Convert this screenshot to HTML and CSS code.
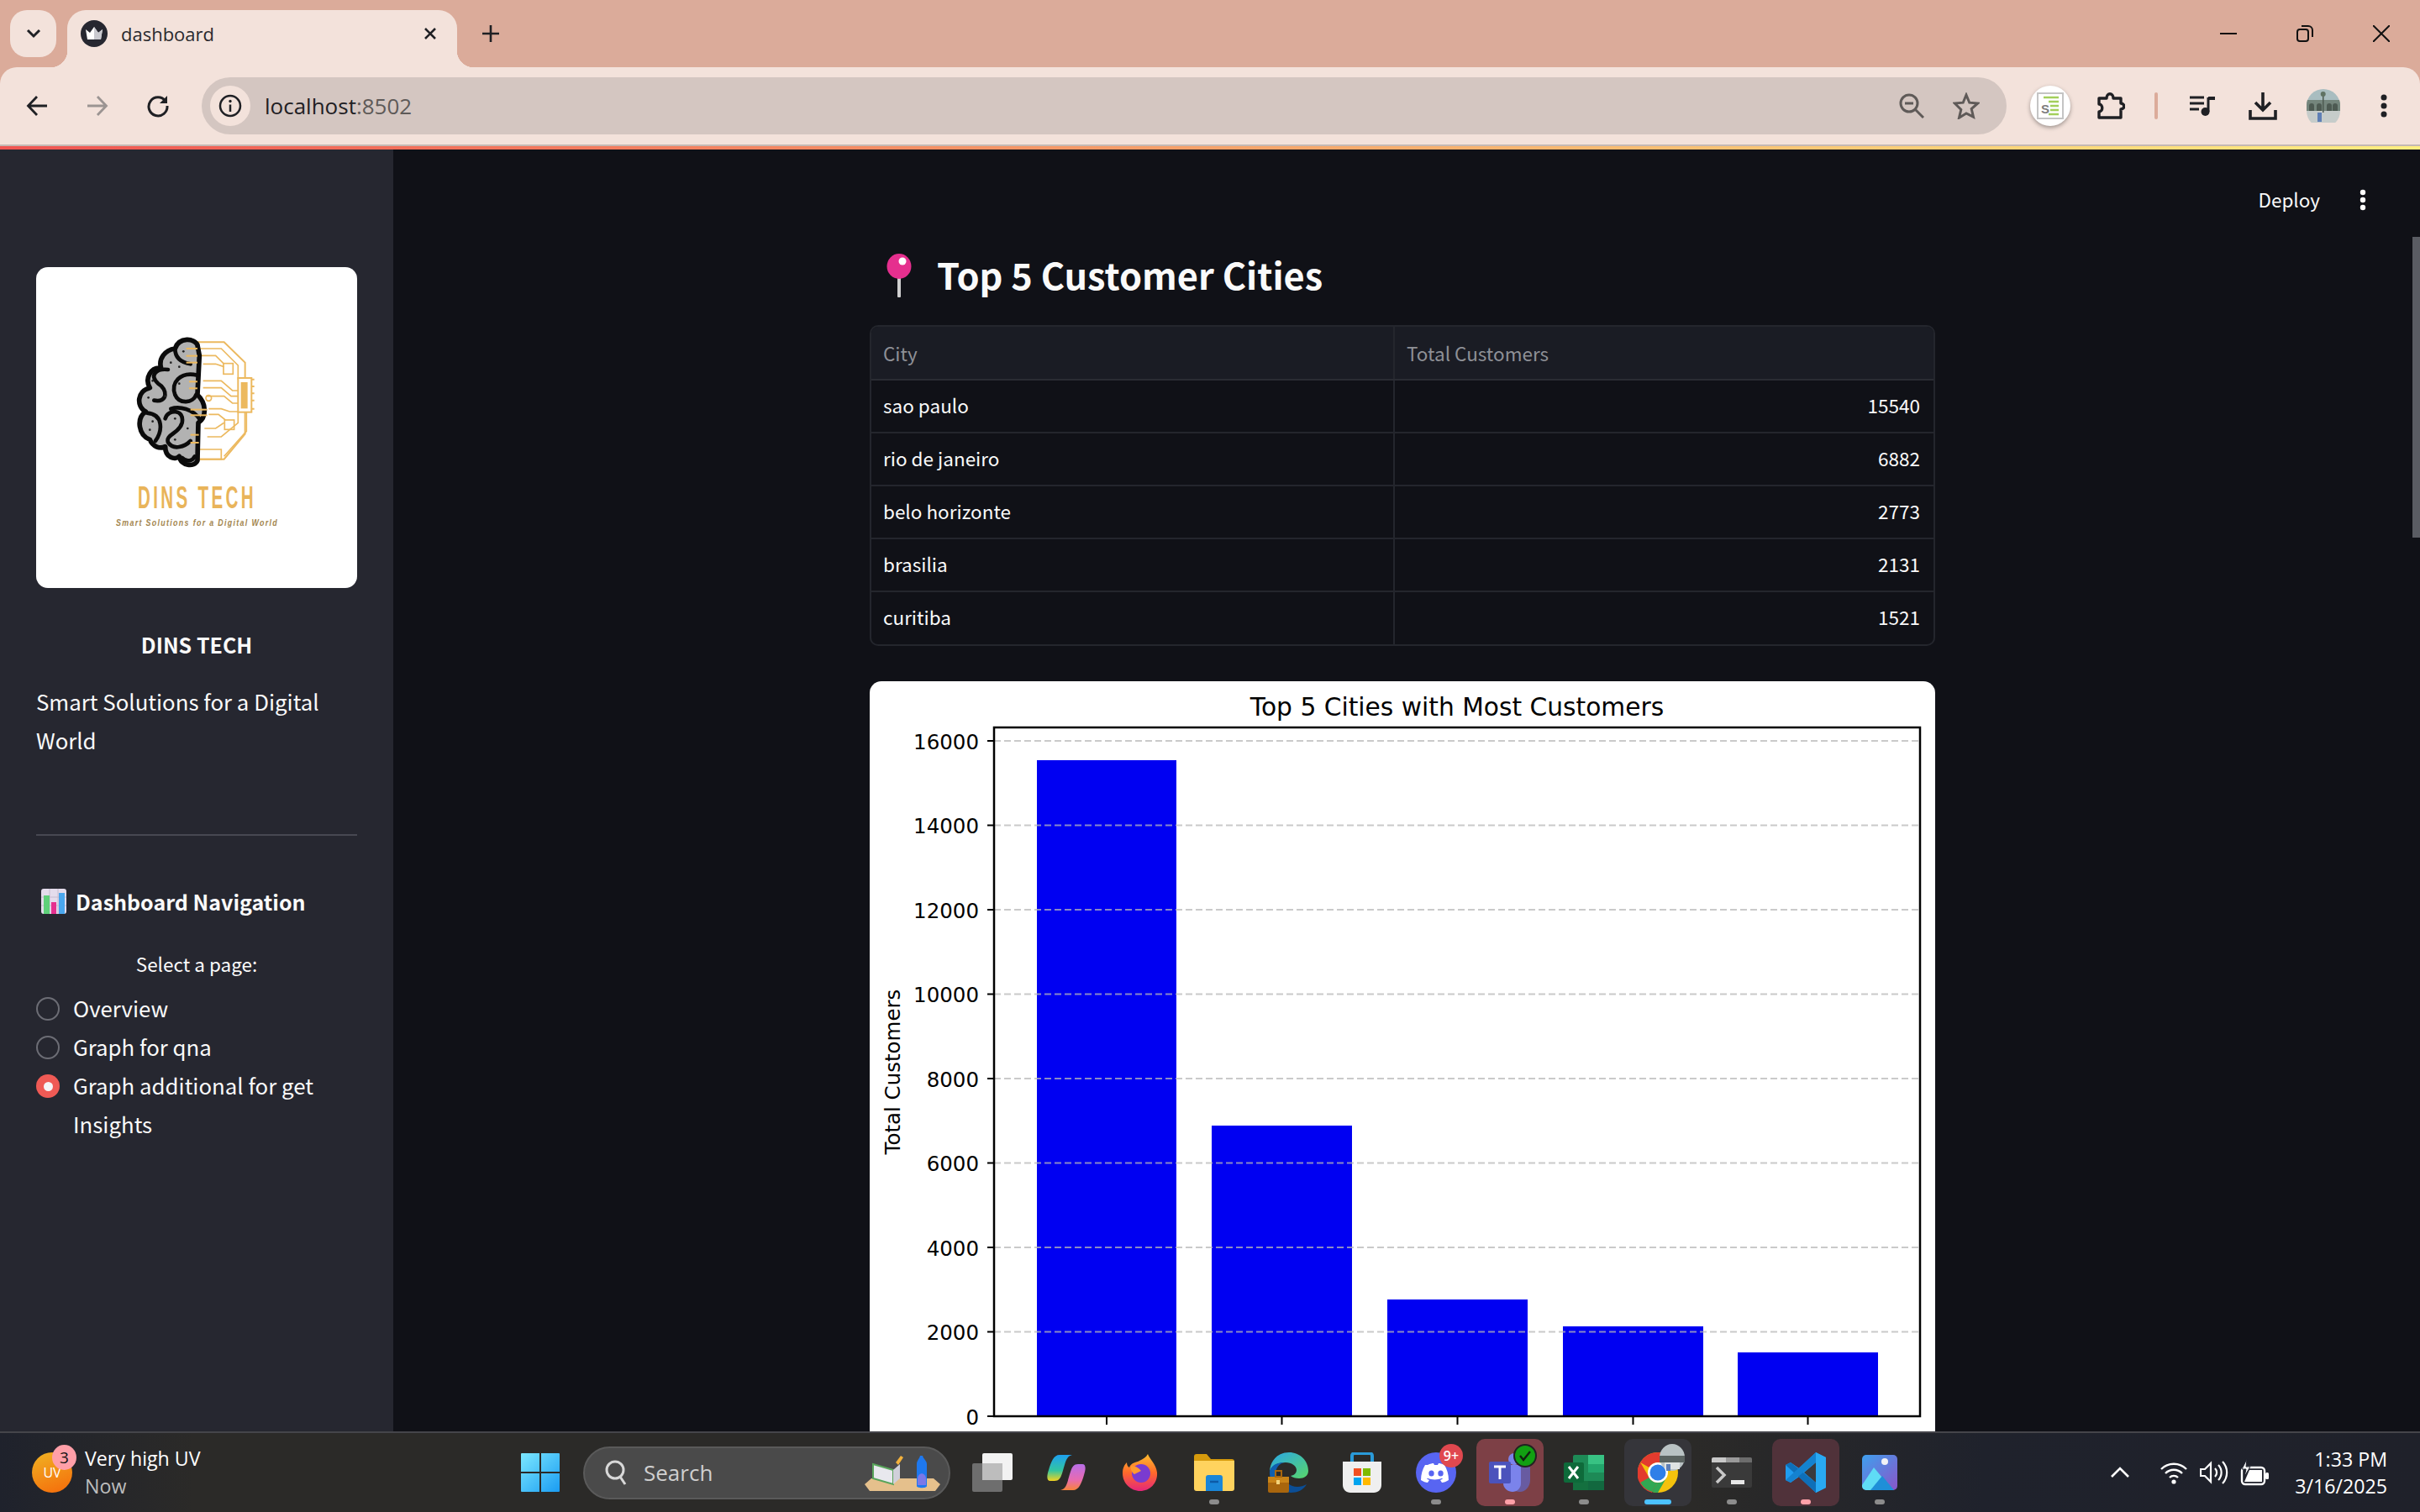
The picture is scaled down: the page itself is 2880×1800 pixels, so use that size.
FILE: index.html
```html
<!DOCTYPE html>
<html lang="en">
<head>
    <meta charset="UTF-8">
    <meta name="viewport" content="width=device-width, initial-scale=1.0">
    <title>dashboard</title>
    <link rel="stylesheet" href="styles.css">
</head>
<body>
    <div class="frame">
        <div class="tabstrip">
            <div class="tab-search">
                <svg width="20" height="14" viewBox="0 0 20 14"><path d="M3 3l7 7 7-7" fill="none" stroke="#1f2024" stroke-width="3"/></svg>
            </div>
            <div class="tab">
                <svg class="favicon" width="32" height="32" viewBox="0 0 32 32">
                    <circle cx="16" cy="16" r="16" fill="#262730"/>
                    <path d="M6 11l5 4 5-7 5 7 5-4-2 12H8z" fill="#fff"/>
                    <path d="M16 8l5 7 5-4-2 12h-8z" fill="#c9c9cf"/>
                </svg>
                <span class="tab-title">dashboard</span>
                <svg class="tab-close" width="16" height="16" viewBox="0 0 16 16"><path d="M2 2l12 12M14 2L2 14" stroke="#1f2024" stroke-width="2.6"/></svg>
            </div>
            <svg class="new-tab" width="24" height="24" viewBox="0 0 24 24"><path d="M12 2v20M2 12h20" stroke="#1f2024" stroke-width="2.6"/></svg>
            <div class="win-controls">
                <svg width="20" height="20" viewBox="0 0 20 20"><path d="M0 10h20" stroke="#111" stroke-width="2"/></svg>
                <svg width="20" height="20" viewBox="0 0 20 20"><rect x="1" y="5" width="13" height="14" rx="3" fill="none" stroke="#111" stroke-width="2"/><path d="M6 1h8a5 5 0 0 1 5 5v8" fill="none" stroke="#111" stroke-width="2"/></svg>
                <svg width="20" height="20" viewBox="0 0 20 20"><path d="M0 0l20 20M20 0L0 20" stroke="#111" stroke-width="2"/></svg>
            </div>
        </div>
        <div class="toolbar">
            <div class="tool">
                <svg width="28" height="28" viewBox="0 0 28 28"><path d="M26 14H4M14 3L3.500 14 14 25" fill="none" stroke="#1f2024" stroke-width="2.800"/></svg>
            </div>
            <div class="tool">
                <svg width="28" height="28" viewBox="0 0 28 28"><path d="M2 14h22M14 3l10.500 11L14 25" fill="none" stroke="#9b9492" stroke-width="2.800"/></svg>
            </div>
            <div class="tool">
                <svg width="28" height="28" viewBox="0 0 28 28"><path d="M23 8.500A11 11 0 1 0 25 14" fill="none" stroke="#1f2024" stroke-width="3"/><path d="M25 2v9h-9z" fill="#1f2024"/></svg>
            </div>
            <div class="omnibox">
                <div class="site-chip">
                    <svg width="28" height="28" viewBox="0 0 28 28"><circle cx="14" cy="14" r="12" fill="none" stroke="#1f2024" stroke-width="2.500"/><path d="M14 12.500V21" stroke="#1f2024" stroke-width="2.500"/><circle cx="14" cy="8.500" r="1.700" fill="#1f2024"/></svg>
                </div>
                <span class="url">localhost<span class="url-port">:8502</span></span>
                <svg class="omni-zoom" width="30" height="30" viewBox="0 0 30 30"><circle cx="12" cy="12" r="10" fill="none" stroke="#5f5a58" stroke-width="3"/><path d="M7 12h10" stroke="#5f5a58" stroke-width="3"/><path d="M19 19l10 10" stroke="#5f5a58" stroke-width="3"/></svg>
                <svg class="omni-star" width="32" height="32" viewBox="0 0 32 32"><path d="M16 3l3.800 9.200 9.900.800-7.500 6.500 2.300 9.700L16 25l-8.500 5.200 2.300-9.700L2.300 13l9.900-.800z" fill="none" stroke="#5f5a58" stroke-width="3"/></svg>
            </div>
            <div class="tool">
                <div class="ext-badge">
                    <svg width="32" height="32" viewBox="0 0 32 32">
                        <rect x="1" y="1" width="30" height="30" fill="#fff" stroke="#c4c4c4" stroke-width="2"/>
                        <path d="M8 6h18M14 11h12M16 16h10M16 21h10M14 26h12" stroke="#a3cf5b" stroke-width="2.600"/>
                        <text x="5" y="25" class="ext-letter">S</text>
                    </svg>
                </div>
            </div>
            <div class="tool">
                <svg width="34" height="34" viewBox="0 0 34 34"><path d="M3 8h9c0-7 8-7 8 0h9v6c5 0 5 7 0 7v10H3v-7c5 0 5-9 0-9z" fill="none" stroke="#1f2024" stroke-width="3.400" stroke-linejoin="round"/></svg>
            </div>
            <div class="tool-sep"></div>
            <div class="tool">
                <svg width="32" height="26" viewBox="0 0 32 26"><path d="M1 3h17M1 10h17M1 17h11" stroke="#1f2024" stroke-width="3"/><path d="M23 3v17" stroke="#1f2024" stroke-width="3"/><path d="M23 2h8v4h-8z" fill="#1f2024"/><circle cx="19.500" cy="20" r="5" fill="#1f2024"/></svg>
            </div>
            <div class="tool">
                <svg width="34" height="34" viewBox="0 0 34 34"><path d="M17 1v21M8 13l9 9 9-9" fill="none" stroke="#1f2024" stroke-width="3.600"/><path d="M2 22v10h30V22" fill="none" stroke="#1f2024" stroke-width="3.600"/></svg>
            </div>
            <div class="tool">
                <svg class="avatar" width="40" height="40" viewBox="0 0 40 40">
                    <circle cx="20" cy="20" r="20" fill="#a9bdc0"/>
                    <path d="M1 13h38a20 20 0 0 1 1 7v6H0v-6a20 20 0 0 1 1-7z" fill="#74857c"/>
                    <path d="M3 26v-6a3 3 0 0 1 6 0v6zM12 26v-6a3 3 0 0 1 6 0v6zM24 26v-6a3 3 0 0 1 6 0v6zM31 26v-6a3 3 0 0 1 6 0v6z" fill="#4d5a52"/>
                    <path d="M0 26h40a20 20 0 0 1-40 0z" fill="#c6ccca"/>
                    <path d="M19 4h1.500v24H19z" fill="#4d5a50"/>
                    <circle cx="19.700" cy="6" r="3" fill="#5f7263"/>
                    <rect x="13" y="28" width="5" height="11" fill="#5f7fb5"/>
                </svg>
            </div>
            <div class="tool">
                <svg width="10" height="30" viewBox="0 0 10 30"><circle cx="5" cy="5" r="3.500" fill="#1f2024"/><circle cx="5" cy="15" r="3.500" fill="#1f2024"/><circle cx="5" cy="25" r="3.500" fill="#1f2024"/></svg>
            </div>
        </div>
    </div>
    <div class="deco-line"></div>

    <div class="app">
        <aside class="sidebar">
            <div class="logo-card">
                <svg width="382" height="382" viewBox="0 0 382 382">
                    <g transform="scale(0.3333) translate(-129,-84)" class="logo-art">
                        <g fill="none" stroke="#ecb95f" stroke-width="5">
                            <path d="M705 352H800L875 425V480M875 600V680L800 770H710" stroke-width="6"/>
                            <path d="M715 375H790L850 435V485"/>
                            <path d="M720 400H770L800 430M725 430H770L800 440"/>
                            <rect x="798" y="428" width="34" height="38"/>
                            <path d="M725 490H790L830 525H852M725 515H790L825 545H852M735 545H800L830 570H852M745 590H790L820 600H852M745 610H780L805 630"/>
                            <rect x="802" y="630" width="34" height="34"/>
                            <path d="M730 660H770L800 640M740 690H790L850 640V600M710 735H790V770H710zM800 760L880 670V600"/>
                            <circle cx="745" cy="552" r="10"/>
                        </g>
                        <rect x="850" y="480" width="48" height="122" fill="#fff" stroke="#ecb95f" stroke-width="6"/>
                        <rect x="860" y="495" width="24" height="94" fill="#ecb95f"/>
                        <path d="M898 485h10M898 510h10M898 535h10M898 560h10M898 590h10" stroke="#ecb95f" stroke-width="6"/>
                        <path d="M705 362C695 338 640 332 625 375C590 380 565 410 575 445C540 440 515 480 535 515C490 525 485 580 520 600C485 625 495 685 535 700C545 725 570 735 590 725C590 765 625 775 640 760C645 795 695 800 705 775L708 640C738 620 738 570 705 540L712 400Z" fill="#b2b2b2" stroke="#0b0b0b" stroke-width="17" stroke-linejoin="round"/>
                        <g fill="none" stroke="#0b0b0b" stroke-width="14" stroke-linecap="round">
                            <path d="M625 375C625 410 650 425 680 430"/>
                            <path d="M600 450C560 445 530 470 565 500C600 520 600 570 550 560"/>
                            <path d="M705 470C640 455 610 500 625 540C640 575 690 570 700 540"/>
                            <path d="M590 625C600 590 660 590 650 640C640 680 590 680 600 710C620 740 660 725 680 705"/>
                            <path d="M525 605C585 610 580 670 555 705"/>
                            <path d="M650 765C670 785 690 772 695 760"/>
                            <path d="M610 590C640 580 690 590 715 630"/>
                        </g>
                        <g fill="#222">
                            <circle cx="655" cy="385" r="4"/><circle cx="610" cy="425" r="4"/><circle cx="640" cy="440" r="4"/>
                            <circle cx="545" cy="490" r="4"/><circle cx="530" cy="550" r="4"/><circle cx="590" cy="545" r="4"/>
                            <circle cx="640" cy="500" r="4"/><circle cx="545" cy="635" r="4"/><circle cx="535" cy="665" r="4"/>
                            <circle cx="625" cy="625" r="4"/><circle cx="670" cy="660" r="4"/><circle cx="625" cy="700" r="4"/>
                        </g>
                        <g fill="#ecb95f">
                            <rect x="665" y="372" width="40" height="6"/><rect x="665" y="398" width="40" height="6"/><rect x="665" y="422" width="40" height="6"/>
                            <rect x="675" y="490" width="30" height="6"/><rect x="675" y="514" width="30" height="6"/>
                            <rect x="680" y="590" width="60" height="6"/><rect x="680" y="610" width="60" height="6"/>
                            <rect x="680" y="680" width="30" height="6"/><rect x="680" y="708" width="30" height="6"/>
                        </g>
                    </g>
                    <text class="logo-name" x="121" y="287" textLength="141" lengthAdjust="spacingAndGlyphs">DINS TECH</text>
                    <text class="logo-tag" x="95" y="308" textLength="193" lengthAdjust="spacingAndGlyphs">Smart Solutions for a Digital World</text>
                </svg>
            </div>
            <div class="brand">DINS TECH</div>
            <p class="tagline">Smart Solutions for a Digital World</p>
            <hr class="side-rule">
            <div class="nav-title">
                <svg width="30" height="30" viewBox="0 0 30 30">
                    <rect width="30" height="30" rx="3" fill="#e4dcec"/>
                    <path d="M10 0v30M20 0v30M0 10h30M0 20h30" stroke="#c6bccf" stroke-width="1"/>
                    <rect x="3" y="8" width="7" height="22" fill="#5fd07a"/>
                    <rect x="12" y="16" width="6" height="14" fill="#e5308f"/>
                    <rect x="21" y="5" width="7" height="25" fill="#4aa7ee"/>
                </svg>
                <span>Dashboard Navigation</span>
            </div>
            <div class="radio-label">Select a page:</div>
            <div class="radio-row"><span class="radio"></span><span>Overview</span></div>
            <div class="radio-row"><span class="radio"></span><span>Graph for qna</span></div>
            <div class="radio-row"><span class="radio radio-on"></span><span>Graph additional for get Insights</span></div>
        </aside>

        <main class="main">
            <div class="main-head">
                <span class="deploy">Deploy</span>
                <svg width="24" height="28" viewBox="0 0 24 28"><circle cx="12" cy="5" r="3.200" fill="#fff"/><circle cx="12" cy="14" r="3.200" fill="#fff"/><circle cx="12" cy="23" r="3.200" fill="#fff"/></svg>
            </div>
            <div class="content">
                <h1 class="page-title">
                    <svg width="32" height="52" viewBox="0 0 32 52">
                        <rect x="14" y="24" width="4" height="28" rx="1" fill="#cfcfcf"/>
                        <ellipse cx="16" cy="15" rx="14.500" ry="15" fill="#e52f8e"/>
                        <ellipse cx="20" cy="9" rx="4.500" ry="4.500" fill="#fff"/>
                    </svg>
                    <span class="page-title-text">Top 5 Customer Cities</span>
                </h1>
                <div class="table-wrap">
                    <table class="city-table">
                        <thead>
                            <tr><th class="col-city">City</th><th>Total Customers</th></tr>
                        </thead>
                        <tbody>
                            <tr><td>sao paulo</td><td class="num">15540</td></tr>
                            <tr><td>rio de janeiro</td><td class="num">6882</td></tr>
                            <tr><td>belo horizonte</td><td class="num">2773</td></tr>
                            <tr><td>brasilia</td><td class="num">2131</td></tr>
                            <tr><td>curitiba</td><td class="num">1521</td></tr>
                        </tbody>
                    </table>
                </div>
                <div class="chart-card">
                    <svg class="chart" width="1268" height="893" viewBox="1035 811 1268 893">
                        <text class="chart-title" x="1734" y="852" text-anchor="middle">Top 5 Cities with Most Customers</text>
                        <g fill="#0000f2">
                            <rect x="1234" y="905" width="166" height="781"/>
                            <rect x="1442" y="1340" width="167" height="346"/>
                            <rect x="1651" y="1547" width="167" height="139"/>
                            <rect x="1860" y="1579" width="167" height="107"/>
                            <rect x="2068" y="1610" width="167" height="76"/>
                        </g>
                        <g class="grid">
                            <path d="M1183 882H2285"/><path d="M1183 982.500H2285"/><path d="M1183 1083H2285"/><path d="M1183 1183.500H2285"/>
                            <path d="M1183 1284H2285"/><path d="M1183 1384.500H2285"/><path d="M1183 1485H2285"/><path d="M1183 1585.500H2285"/>
                        </g>
                        <rect x="1183" y="866" width="1102" height="820" fill="none" stroke="#000" stroke-width="2.500"/>
                        <path d="M1175 882h8M1175 982.500h8M1175 1083h8M1175 1183.500h8M1175 1284h8M1175 1384.500h8M1175 1485h8M1175 1585.500h8M1175 1686h8" stroke="#000" stroke-width="2"/>
                        <path d="M1317 1686v10M1525.500 1686v10M1734.500 1686v10M1943.500 1686v10M2151.500 1686v10" stroke="#000" stroke-width="2"/>
                        <g class="tick-label" text-anchor="end">
                            <text x="1165" y="892">16000</text>
                            <text x="1165" y="992">14000</text>
                            <text x="1165" y="1093">12000</text>
                            <text x="1165" y="1193">10000</text>
                            <text x="1165" y="1294">8000</text>
                            <text x="1165" y="1394">6000</text>
                            <text x="1165" y="1495">4000</text>
                            <text x="1165" y="1595">2000</text>
                            <text x="1165" y="1696">0</text>
                        </g>
                        <text class="tick-label" transform="translate(1071,1276) rotate(-90)" text-anchor="middle">Total Customers</text>
                    </svg>
                </div>
            </div>
            <div class="scroll-thumb"></div>
        </main>
    </div>

    <footer class="taskbar">
        <div class="weather">
            <div class="uv-icon">
                <span class="uv-text">UV</span>
                <span class="uv-badge">3</span>
            </div>
            <div class="weather-text">
                <div>Very high UV</div>
                <div class="weather-sub">Now</div>
            </div>
        </div>
        <svg class="start" width="46" height="46" viewBox="0 0 46 46">
            <defs><linearGradient id="winblue" x1="0" y1="0" x2="1" y2="1"><stop offset="0" stop-color="#7ce8ff"/><stop offset="1" stop-color="#1a9cf2"/></linearGradient></defs>
            <path d="M0 1a1 1 0 0 1 1-1h21v22H0zM24 0h21a1 1 0 0 1 1 1v21H24zM0 24h22v22H1a1 1 0 0 1-1-1zM24 24h22v21a1 1 0 0 1-1 1H24z" fill="url(#winblue)"/>
        </svg>
        <div class="search">
            <svg width="30" height="32" viewBox="0 0 30 32"><circle cx="14" cy="13" r="10" fill="none" stroke="#d8d8d8" stroke-width="3"/><path d="M20 21l6 9" stroke="#d8d8d8" stroke-width="3"/></svg>
            <span class="search-text">Search</span>
            <svg class="search-art" width="90" height="48" viewBox="0 0 90 48">
                <path d="M0 38l8-7h74l8 7-6 8H6z" fill="#e5c08c"/>
                <path d="M10 14l24 7v17l-24-7z" fill="#e8e8ee" stroke="#58a45a" stroke-width="2"/>
                <path d="M34 21l8-7v17l-8 7z" fill="#d0d0da"/>
                <path d="M37 12l6-8 3 2-6 9z" fill="#f4b23c"/>
                <path d="M62 14c0-4 3-6 4-10h3c1 4 5 6 5 10v26c0 3-12 3-12 0z" fill="#1e78ee"/>
                <path d="M63 32c0-9 10-9 10 0v7H63z" fill="#7a78e8"/>
            </svg>
        </div>
        <div class="apps">
            <div class="app-slot">
                <svg width="48" height="46" viewBox="0 0 48 46">
                    <rect x="12" width="36" height="32" rx="2" fill="#f2f2f2"/>
                    <rect y="12" width="36" height="34" rx="2" fill="#6e6e6e"/>
                    <rect x="12" y="12" width="24" height="20" fill="#bdbdbd"/>
                </svg>
            </div>
            <div class="app-slot">
                <svg width="46" height="42" viewBox="0 0 46 42">
                    <defs>
                        <linearGradient id="cop1" x1="0" y1="0" x2="0" y2="1"><stop offset="0" stop-color="#1ea0f0"/><stop offset=".6" stop-color="#33c6a0"/><stop offset="1" stop-color="#f3d21f"/></linearGradient>
                        <linearGradient id="cop2" x1="0" y1="0" x2="0" y2="1"><stop offset="0" stop-color="#b86ee8"/><stop offset=".6" stop-color="#e86bb0"/><stop offset="1" stop-color="#f7843a"/></linearGradient>
                    </defs>
                    <path d="M15 0h15c-8 2-8 10-12 22-2 6-4 9-9 9H4C-1 31 0 24 2 18 5 8 8 0 15 0z" fill="url(#cop1)"/>
                    <path d="M31 42H16c8-2 8-10 12-22 2-6 4-9 9-9h5c5 0 4 7 2 13-3 10-6 18-13 18z" fill="url(#cop2)"/>
                </svg>
            </div>
            <div class="app-slot">
                <svg width="42" height="44" viewBox="0 0 42 44">
                    <defs><linearGradient id="ffx" x1="0" y1="0" x2="0" y2="1"><stop offset="0" stop-color="#ffbd2e"/><stop offset=".5" stop-color="#ff6a2a"/><stop offset="1" stop-color="#e5267a"/></linearGradient></defs>
                    <path d="M30 0c2 6 10 12 11 22 1 13-9 22-20 22S0 35 0 23c0-6 2-10 5-13 0 3 1 5 3 6 2-6 9-6 12-8 4-2 8-4 10-8z" fill="url(#ffx)"/>
                    <circle cx="22" cy="23" r="11" fill="#7a3bd0"/>
                    <path d="M10 14c5 0 9 2 12 6l-8 4c-3-2-5-6-4-10z" fill="#ff9a2e"/>
                </svg>
            </div>
            <div class="app-slot has-dot">
                <svg width="48" height="44" viewBox="0 0 48 44">
                    <path d="M0 3a3 3 0 0 1 3-3h12l5 6h25a3 3 0 0 1 3 3v8H0z" fill="#d69a0c"/>
                    <path d="M0 8h48v33a3 3 0 0 1-3 3H3a3 3 0 0 1-3-3z" fill="#ffd35e"/>
                    <path d="M14 28a3 3 0 0 1 3-3h14a3 3 0 0 1 3 3v16H14z" fill="#1a86d8"/>
                    <path d="M19 33h10" stroke="#0d5aa6" stroke-width="2.500"/>
                </svg>
            </div>
            <div class="app-slot">
                <svg width="48" height="48" viewBox="0 0 48 48">
                    <defs><linearGradient id="edg" x1="0" y1="0" x2="1" y2="1"><stop offset="0" stop-color="#2aa7e8"/><stop offset="1" stop-color="#58d66a"/></linearGradient></defs>
                    <path d="M2 24C2 10 12 0 25 0c13 0 23 10 23 22 0 6-5 9-11 9-4 0-8-1-10-3 5-1 7-4 7-7 0-5-6-9-13-9C10 12 2 18 2 24z" fill="url(#edg)"/>
                    <path d="M2 24c0-7 8-12 17-12-7 2-10 8-10 14 0 10 8 18 18 20-1 1-3 2-6 2C10 48 2 36 2 24z" fill="#0f5fb0"/>
                    <path d="M27 48c8 0 15-3 19-10-5 3-12 4-17 2-3-1-6-3-7-6 0 6 1 14 5 14z" fill="#0b4e96"/>
                    <rect y="29" width="25" height="19" rx="2" fill="#a9660d"/>
                    <rect y="29" width="25" height="7" fill="#c98418"/>
                    <rect x="9" y="22" width="7" height="7" fill="none" stroke="#a9660d" stroke-width="2"/>
                    <rect x="10" y="33" width="4" height="5" fill="#f4d37a"/>
                </svg>
            </div>
            <div class="app-slot">
                <svg width="46" height="48" viewBox="0 0 46 48">
                    <path d="M11 12V4a3 3 0 0 1 3-3h18a3 3 0 0 1 3 3v8" fill="none" stroke="#2a9ad8" stroke-width="4"/>
                    <path d="M0 11h46v28c0 5-4 9-9 9H9c-5 0-9-4-9-9z" fill="#efefef"/>
                    <rect x="13" y="19" width="9" height="9" fill="#f25022"/>
                    <rect x="24" y="19" width="9" height="9" fill="#7fba00"/>
                    <rect x="13" y="30" width="9" height="9" fill="#00a4ef"/>
                    <rect x="24" y="30" width="9" height="9" fill="#ffb900"/>
                </svg>
            </div>
            <div class="app-slot has-dot">
                <svg width="48" height="48" viewBox="0 0 48 48">
                    <circle cx="24" cy="24" r="24" fill="#5865f2"/>
                    <path d="M14 15c3-1.500 6-2 7-2l1 2h4l1-2c1 0 4 .5 7 2 3 5 5 11 5 18-3 2-6 3-8 3l-2-3 3-1.500-1-.8c-5 2.300-12 2.300-17 0l-1 .8 3 1.500-2 3c-2 0-5-1-8-3 0-7 2-13 5-18z" fill="#fff"/>
                    <ellipse cx="18.500" cy="25" rx="3.200" ry="3.600" fill="#5865f2"/>
                    <ellipse cx="29.500" cy="25" rx="3.200" ry="3.600" fill="#5865f2"/>
                </svg>
                <span class="app-badge badge-red">9+</span>
            </div>
            <div class="app-slot has-dot dot-pink slot-teams">
                <svg width="50" height="46" viewBox="0 0 50 46">
                    <circle cx="30" cy="7" r="7" fill="#7b83eb"/>
                    <path d="M19 14h26a4 4 0 0 1 4 4v14c0 8-6 14-12 14s-18-4-18-14z" fill="#5f67c8" opacity=".7"/>
                    <path d="M17 14h18a3 3 0 0 1 3 3v19c0 6-5 10-10 10s-11-4-11-10z" fill="#7b83eb"/>
                    <rect y="10" width="26" height="26" rx="2" fill="#4b53bc"/>
                    <path d="M6 16h14M13 16v15" stroke="#fff" stroke-width="3"/>
                </svg>
                <span class="app-badge badge-green">
                    <svg width="16" height="14" viewBox="0 0 16 14"><path d="M2 7l4 5 8-10" fill="none" stroke="#10230f" stroke-width="2.400"/></svg>
                </span>
            </div>
            <div class="app-slot has-dot">
                <svg width="48" height="42" viewBox="0 0 48 42">
                    <rect x="11" width="37" height="42" rx="2" fill="#1d8a56"/>
                    <rect x="29" width="19" height="11" fill="#38c283"/>
                    <rect x="29" y="11" width="19" height="10" fill="#22a56b"/>
                    <rect x="29" y="31" width="19" height="11" fill="#12683f"/>
                    <rect x="11" y="31" width="18" height="11" fill="#14703f"/>
                    <rect y="9" width="24" height="24" rx="2" fill="#0e6a3a"/>
                    <path d="M6 14l11 14M17 14L6 28" stroke="#fff" stroke-width="3"/>
                </svg>
            </div>
            <div class="app-slot slot-chrome dot-blue">
                <svg width="48" height="48" viewBox="0 0 48 48">
                    <circle cx="24" cy="24" r="24" fill="#f4c20d"/>
                    <path d="M24 0a24 24 0 0 1 20.800 12H24a12 12 0 0 0-10.400 6L3.200 12A24 24 0 0 1 24 0z" fill="#e33b2e"/>
                    <path d="M3.200 12l10.400 18A12 12 0 0 0 24 36l-7 12A24 24 0 0 1 3.200 12z" fill="#e33b2e"/>
                    <path d="M34.400 30L24 48a24 24 0 0 1-7.500-1.200L24 36a12 12 0 0 0 10.400-6z" fill="#31a853"/>
                    <path d="M3.200 36A24 24 0 0 0 16.500 46.800L24 36a12 12 0 0 1-10.400-6z" fill="#31a853"/>
                    <circle cx="24" cy="24" r="12" fill="#fff"/>
                    <circle cx="24" cy="24" r="9.500" fill="#2f7fe8"/>
                </svg>
                <svg class="chrome-avatar" width="30" height="32" viewBox="0 0 30 32">
                    <ellipse cx="15" cy="16" rx="15" ry="16" fill="#b9c2c4"/>
                    <path d="M0 14h30v8H0z" fill="#5b6361"/>
                    <path d="M6 22h18v8H6z" fill="#dfe3e3"/>
                    <path d="M8 24h5v8H8z" fill="#5f7fb5"/>
                </svg>
            </div>
            <div class="app-slot has-dot">
                <svg width="48" height="36" viewBox="0 0 48 36">
                    <rect width="48" height="36" rx="2" fill="#3a3a3a"/>
                    <path d="M0 2a2 2 0 0 1 2-2h15v6H0z" fill="#c8c8c8"/>
                    <rect x="17" width="16" height="6" fill="#9a9a9a"/>
                    <path d="M33 0h13a2 2 0 0 1 2 2v4H33z" fill="#6c6c6c"/>
                    <path d="M6 12l9 9-9 9" fill="none" stroke="#c8c8c8" stroke-width="3.500"/>
                    <rect x="23" y="27" width="16" height="5" fill="#e8e8e8"/>
                </svg>
            </div>
            <div class="app-slot has-dot dot-pink slot-code">
                <svg width="48" height="48" viewBox="0 0 48 48">
                    <path d="M36 0l12 6v36l-12 6-20-19L6 36l-6-3V15l6-3 10 7z" fill="#1f9cf0"/>
                    <path d="M36 12L22 24l14 12z" fill="#3a3a3e"/>
                    <path d="M0 15l6-3 30 24v12z" fill="#0e6fb8"/>
                    <path d="M36 0v12L6 36l-6-3z" fill="#1482d0"/>
                    <path d="M36 0l12 6v36l-12 6z" fill="#29a9f2"/>
                </svg>
            </div>
            <div class="app-slot has-dot">
                <svg width="42" height="42" viewBox="0 0 42 42">
                    <defs><linearGradient id="pho" x1="0" y1="0" x2="1" y2="1"><stop offset="0" stop-color="#3ea0ee"/><stop offset="1" stop-color="#8a55c8"/></linearGradient></defs>
                    <rect width="42" height="42" rx="5" fill="url(#pho)"/>
                    <ellipse cx="27" cy="8" rx="4" ry="4" fill="#f2f2f6"/>
                    <path d="M0 36l14-21 10 12-8 15H5a5 5 0 0 1-5-5z" fill="#5fdcf5"/>
                    <path d="M10 42l14-17 14 17z" fill="#1f8fd8"/>
                </svg>
            </div>
        </div>
        <div class="tray">
            <svg class="tray-chevron" width="32" height="20" viewBox="0 0 32 20"><path d="M6 15l10-10 10 10" fill="none" stroke="#fff" stroke-width="2.600"/></svg>
            <svg width="34" height="28" viewBox="0 0 34 28"><path d="M2 10a21 21 0 0 1 30 0M7 15a14 14 0 0 1 20 0M12 20a7 7 0 0 1 10 0" fill="none" stroke="#fff" stroke-width="2.400"/><circle cx="17" cy="25" r="2.600" fill="#fff"/></svg>
            <svg width="34" height="28" viewBox="0 0 34 28"><path d="M1 10h5l7-7v22l-7-7H1z" fill="none" stroke="#fff" stroke-width="2.200"/><path d="M18 9a7 7 0 0 1 0 10M22 5a13 13 0 0 1 0 18M27 1a19 19 0 0 1 0 26" fill="none" stroke="#fff" stroke-width="2.200"/></svg>
            <svg width="34" height="32" viewBox="0 0 34 32"><rect x="2" y="10" width="27" height="20" rx="4" fill="none" stroke="#fff" stroke-width="2.400"/><path d="M11 13h15v14H5z" fill="#fff"/><rect x="30" y="16" width="4" height="8" rx="1.500" fill="#fff"/><path d="M8 0L2 12h5l-2 9 7-12H7z" fill="#fff" stroke="#1f222c" stroke-width="1"/></svg>
            <div class="clock">
                <div>1:33 PM</div>
                <div>3/16/2025</div>
            </div>
        </div>
    </footer>
</body>
</html>
```

FILE: styles.css
```css
* {
    box-sizing: border-box;
}

html,
body {
    margin: 0;
    padding: 0;
}

body {
    width: 2880px;
    height: 1800px;
    overflow: hidden;
    display: flex;
    flex-direction: column;
    font-family: "Noto Sans CJK SC", "Noto Sans", sans-serif;
    color: #fafafa;
    background: #101117;
}

/* browser chrome */
.frame {
    flex: none;
    background: #dbab9a;
}

.tabstrip {
    height: 80px;
    padding-top: 12px;
    display: flex;
    align-items: flex-start;
}

.tab-search {
    width: 55px;
    height: 56px;
    margin-left: 12px;
    border-radius: 20px;
    background: #f3e2db;
    display: flex;
    align-items: center;
    justify-content: center;
}

.tab {
    position: relative;
    width: 464px;
    height: 68px;
    margin-left: 13px;
    padding: 0 24px 12px 16px;
    border-radius: 22px 22px 0 0;
    background: #f3e2db;
    display: flex;
    align-items: center;
    font-family: "Open Sans", sans-serif;
}

.tab::before,
.tab::after {
    content: "";
    position: absolute;
    bottom: 0;
    width: 20px;
    height: 20px;
}

.tab::before {
    left: -20px;
    background: radial-gradient(circle at 0 0, transparent 20px, #f3e2db 20.5px);
}

.tab::after {
    right: -20px;
    background: radial-gradient(circle at 100% 0, transparent 20px, #f3e2db 20.5px);
}

.favicon {
    flex: none;
}

.tab-title {
    margin-left: 16px;
    font-size: 22px;
    color: #2a2a2e;
}

.tab-close {
    margin-left: auto;
}

.new-tab {
    margin: 16px 0 0 28px;
}

.win-controls {
    margin: 18px 36px 0 auto;
    display: flex;
    gap: 71px;
}

.toolbar {
    height: 92px;
    padding-left: 8px;
    border-radius: 20px 20px 0 0;
    background: #f3e2db;
    display: flex;
    align-items: center;
}

.tool {
    flex: none;
    width: 72px;
    height: 72px;
    display: flex;
    align-items: center;
    justify-content: center;
}

.omnibox {
    flex: none;
    width: 2148px;
    height: 68px;
    margin: 0 16px;
    padding-left: 10px;
    border-radius: 34px;
    background: #d4c6c1;
    display: flex;
    align-items: center;
}

.site-chip {
    width: 48px;
    height: 48px;
    border-radius: 50%;
    background: #f3e2db;
    display: flex;
    align-items: center;
    justify-content: center;
}

.url {
    margin-left: 17px;
    font-family: "Open Sans", sans-serif;
    font-size: 26px;
    color: #1f2024;
}

.url-port {
    color: #5e5a58;
}

.omni-zoom {
    margin-left: auto;
}

.omni-star {
    margin: 0 32px 0 34px;
}

.ext-badge {
    width: 48px;
    height: 48px;
    border-radius: 50%;
    background: #fff;
    box-shadow: 0 2px 5px rgba(0, 0, 0, 0.35);
    display: flex;
    align-items: center;
    justify-content: center;
}

.ext-letter {
    font-family: "Liberation Sans", sans-serif;
    font-size: 15px;
    font-weight: bold;
    fill: #7d7d7d;
}

.tool-sep {
    flex: none;
    width: 4px;
    height: 32px;
    margin: 0 17px 0 16px;
    border-radius: 2px;
    background: #dbab9a;
}

.deco-line {
    flex: none;
    height: 6px;
    border-top: 2px solid #c4b8b3;
    background: linear-gradient(90deg, #ef5552, #ffee80);
}

/* streamlit app */
.app {
    flex: 1;
    min-height: 0;
    display: flex;
}

.sidebar {
    flex: none;
    width: 468px;
    padding: 140px 43px 0;
    background: #262730;
    font-size: 25.800px;
    line-height: 46px;
}

.logo-card {
    height: 382px;
    border-radius: 14px;
    background: #fff;
    overflow: hidden;
}

.logo-card svg {
    display: block;
}

.logo-art {
    filter: blur(0.7px);
}

.logo-name {
    font-family: "Liberation Sans", sans-serif;
    font-size: 37px;
    font-weight: bold;
    letter-spacing: 6px;
    fill: #e9b45a;
}

.logo-tag {
    font-family: "Liberation Sans", sans-serif;
    font-size: 10px;
    font-weight: bold;
    font-style: italic;
    letter-spacing: 1.500px;
    fill: #a3864f;
}

.brand {
    margin-top: 44px;
    text-align: center;
    font-size: 25px;
    font-weight: 600;
}

.tagline {
    margin: 22px 0 0;
}

.side-rule {
    margin: 89px 0 0;
    border: 0;
    border-top: 2px solid #474852;
}

.nav-title {
    margin-top: 55px;
    padding-left: 6px;
    display: flex;
    align-items: center;
    gap: 11px;
    font-size: 25px;
    font-weight: 600;
}

.radio-label {
    margin: 33px 0 12px;
    text-align: center;
    font-size: 22.500px;
    line-height: 36px;
}

.radio-row {
    display: flex;
    align-items: flex-start;
    gap: 16px;
}

.radio {
    flex: none;
    width: 28px;
    height: 28px;
    margin-top: 10px;
    border: 2px solid #6c6d75;
    border-radius: 50%;
}

.radio-on {
    border: 0;
    background: #ef5a55;
    display: flex;
    align-items: center;
    justify-content: center;
}

.radio-on::after {
    content: "";
    width: 11px;
    height: 11px;
    border-radius: 50%;
    background: #f5f5f7;
}

.main {
    position: relative;
    flex: 1;
    min-width: 0;
    padding-right: 10px;
    overflow: hidden;
    background: #101117;
}

.main-head {
    height: 107px;
    padding: 38px 46px 0 0;
    display: flex;
    justify-content: flex-end;
    gap: 39px;
    font-size: 22.500px;
    line-height: 42px;
}

.main-head svg {
    margin-top: 8px;
}

.content {
    width: 1268px;
    margin: 0 auto;
}

.page-title {
    height: 86px;
    margin: 0 0 16px;
    padding-left: 19px;
    display: flex;
    align-items: center;
    gap: 29px;
    font-size: 43.300px;
    font-weight: 600;
    line-height: 1;
}

.page-title-text {
    margin-top: -3px;
}

.table-wrap {
    border: 2px solid #24262d;
    border-radius: 10px;
    overflow: hidden;
}

.city-table {
    width: 100%;
    border-collapse: collapse;
    table-layout: fixed;
    font-size: 22.500px;
    line-height: 36px;
}

.city-table th {
    height: 63px;
    padding: 0 14px 1px;
    text-align: left;
    font-weight: 400;
    color: #8e9096;
    background: #1a1c24;
    border-bottom: 2px solid #2a2c33;
}

.city-table td {
    height: 63px;
    padding: 0 16px 4px 14px;
    border-bottom: 2px solid #24262d;
}

.city-table tr:last-child td {
    border-bottom: 0;
}

.city-table th + th,
.city-table td + td {
    border-left: 2px solid #24262d;
}

.col-city {
    width: 622px;
}

.num {
    text-align: right;
}

.chart-card {
    height: 900px;
    margin-top: 42px;
    border-radius: 14px 14px 0 0;
    background: #fff;
    overflow: hidden;
}

.chart {
    display: block;
    font-family: "DejaVu Sans", sans-serif;
}

.chart-title {
    font-size: 29.700px;
    fill: #000;
}

.tick-label {
    font-size: 24.500px;
    fill: #000;
}

.grid path {
    fill: none;
    stroke: #b8b8b8;
    stroke-opacity: 0.75;
    stroke-width: 2;
    stroke-dasharray: 8 4;
}

.scroll-thumb {
    position: absolute;
    top: 104px;
    right: 0;
    width: 9px;
    height: 358px;
    background: #5a5c63;
}

/* windows taskbar */
.taskbar {
    flex: none;
    height: 96px;
    padding-left: 38px;
    border-top: 2px solid #45454a;
    background: linear-gradient(90deg, #1f222c 0, #2b2a28 8%, #2b2a28 70%, #1f222c 82%, #1f212a 100%);
    display: flex;
    align-items: center;
    font-family: "Open Sans", sans-serif;
}

.weather {
    flex: none;
    width: 582px;
    display: flex;
    align-items: center;
    gap: 15px;
}

.uv-icon {
    position: relative;
    width: 48px;
    height: 48px;
    border-radius: 50%;
    background: linear-gradient(160deg, #f0b323, #f56a0a);
    display: flex;
    align-items: center;
    justify-content: center;
}

.uv-text {
    font-size: 16px;
    color: #fff;
}

.uv-badge {
    position: absolute;
    top: -9px;
    right: -5px;
    width: 29px;
    height: 30px;
    border-radius: 50%;
    background: #ff9fa8;
    color: #111;
    font-size: 19px;
    line-height: 30px;
    text-align: center;
}

.weather-text {
    font-size: 23.200px;
    line-height: 33px;
    color: #fff;
}

.weather-sub {
    color: #bdbdbd;
}

.start {
    flex: none;
}

.search {
    flex: none;
    width: 437px;
    height: 63px;
    margin-left: 28px;
    padding: 0 10px 0 22px;
    border: 2px solid #5a5a5a;
    border-radius: 32px;
    background: #4a4a4a;
    display: flex;
    align-items: center;
    gap: 18px;
    font-size: 26px;
    color: #cfcfcf;
}

.search-art {
    margin-left: auto;
}

.apps {
    flex: none;
    margin-left: 10px;
    display: flex;
    gap: 8px;
}

.app-slot {
    position: relative;
    width: 80px;
    height: 80px;
    border-radius: 10px;
    display: flex;
    align-items: center;
    justify-content: center;
}

.has-dot::after,
.dot-blue::after {
    content: "";
    position: absolute;
    left: 50%;
    bottom: 2px;
    width: 12px;
    height: 6px;
    margin-left: -6px;
    border-radius: 3px;
    background: #8c8c8c;
}

.dot-pink::after {
    background: #ffa0a8;
}

.dot-blue::after {
    width: 32px;
    margin-left: -16px;
    background: #4cc2ff;
}

.slot-teams {
    background: #7d4046;
}

.slot-chrome {
    background: #35353a;
}

.slot-code {
    background: #50323a;
}

.chrome-avatar {
    position: absolute;
    top: 6px;
    right: 8px;
}

.app-badge {
    position: absolute;
    top: 6px;
    right: 8px;
    width: 28px;
    height: 28px;
    border-radius: 50%;
    display: flex;
    align-items: center;
    justify-content: center;
    font-size: 16px;
    font-weight: 600;
    color: #fff;
}

.badge-red {
    background: #e0484f;
}

.badge-green {
    border: 2px solid #222;
    background: #12a012;
}

.tray {
    flex: 1;
    padding-right: 39px;
    display: flex;
    align-items: center;
    justify-content: flex-end;
    gap: 14px;
}

.tray-chevron {
    margin-right: 17px;
}

.clock {
    width: 127px;
    text-align: right;
    font-size: 23.200px;
    line-height: 32px;
    color: #fff;
}
```
